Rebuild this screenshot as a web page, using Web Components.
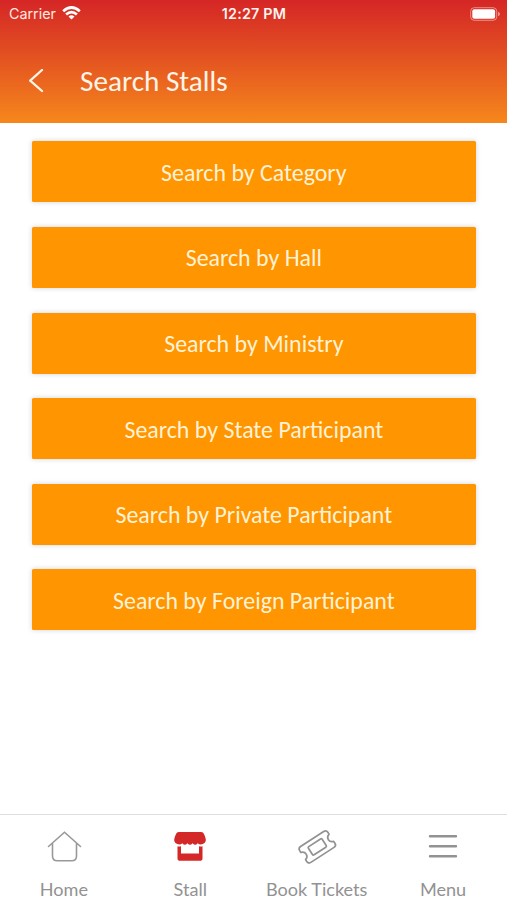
<!DOCTYPE html>
<html lang="en">
<head>
<meta charset="utf-8">
<title>Search Stalls</title>
<style>
html,body{margin:0;height:100%;background:#fff}
body{font-family:Carlito,Lato,sans-serif;overflow:hidden}
</style>
</head>
<body>
<stall-app></stall-app>
<script>
const define = (name, html, setup) => customElements.define(name, class extends HTMLElement {
  constructor() {
    super();
    this.attachShadow({ mode: 'open' }).innerHTML = html;
  }
  connectedCallback() { if (setup) setup(this); }
});

define('status-bar', `
<style>
:host{display:grid;grid-template-columns:1fr auto 1fr;align-items:center;height:27px;padding:0 7px 0 9px;color:#fff;font:14.3px/27px Inter,sans-serif}
.left{display:flex;align-items:center;gap:6px;color:#ffe9e3}
.time{font-weight:600;font-size:14.3px;letter-spacing:.2px;color:#fff4f0;margin-right:1px}
.battery{justify-self:end}
svg{display:block}
.wifi{margin-top:-2px}
</style>
<div class="left"><span>Carrier</span>
<svg class="wifi" width="19" height="14" viewBox="0 0 19 14" fill="none" stroke="#fff" stroke-width="2.7"><path d="M1.2 5.3Q9.5-2.3 17.8 5.3M4.1 8.4Q9.5 3.7 14.9 8.4"/><path d="M6.5 10.6Q9.5 8.1 12.5 10.6L9.5 13.6Z" fill="#fff" stroke="none"/></svg></div>
<span class="time">12:27 PM</span>
<svg class="battery" width="30" height="14" viewBox="0 0 30 14"><rect x=".7" y=".7" width="26" height="12.6" rx="3.5" fill="none" stroke="#fff" stroke-opacity=".45"/><rect x="2.3" y="2.3" width="22.8" height="9.4" rx="2" fill="#fff"/><path d="M28 4.8Q30 5.5 30 7Q30 8.5 28 9.2Z" fill="#fff" opacity=".5"/></svg>`);

define('title-bar', `
<style>
:host{display:flex;align-items:center;height:96px;box-sizing:border-box;padding:11px 0 0 28px;color:#fff4e8;font-size:29.2px;line-height:34px}
svg{display:block;width:16px;height:24px;margin-right:36px}
</style>
<svg viewBox="0 0 16 24" fill="none" stroke="#fff4e8" stroke-width="2.3" stroke-linecap="round" stroke-linejoin="round"><path d="M14 1 2.2 11.7 14 22"/></svg>
<span><slot></slot></span>`);

define('search-button', `
<style>
:host{display:flex;align-items:center;justify-content:center;height:61px;box-sizing:border-box;padding-top:2px;border-radius:1.5px;background:#ff9500;box-shadow:0 0 5px rgba(50,50,80,.22);color:#fff2d6;font-size:23.9px;line-height:28px;white-space:nowrap}
</style><span><slot></slot></span>`);

const icons = {
  home: '<path d="M4.5 17.5 20.5 3.2 36.5 17.5M8.5 14.5V27Q8.5 31.8 13.3 31.8H27.7Q32.5 31.8 32.5 27V14.5" stroke="#999" stroke-width="1.6" stroke-linecap="round"/>',
  stall: '<path d="M8.8 3H31.2Q33.2 3 34 5L35.3 8.2Q37 13.3 32.8 15.1Q29.5 16.2 27.7 14.2Q25.2 17.5 22.6 14.2Q20 17.5 17.4 14.2Q14.8 17.5 12.3 14.2Q10.5 16.2 7.2 15.1Q3 13.3 4.7 8.2L6 5Q6.8 3 8.8 3Z" fill="#d42727"/><path d="M7.5 17.2Q9.2 17.8 11 17.2V24.5H29V17.2Q30.8 17.8 32.5 17.2V29.2Q32.5 31.8 29.8 31.8H10.2Q7.5 31.8 7.5 29.2Z" fill="#d42727"/>',
  ticket: '<g transform="translate(.3 .4) rotate(-33 20 17.5)" stroke="#929292" stroke-width="1.7" stroke-linejoin="round"><path d="M6.2 8H33.8Q36.8 8 36.8 11V13.2Q33.2 14.2 33.2 17.5Q33.2 20.8 36.8 21.8V24Q36.8 27 33.8 27H6.2Q3.2 27 3.2 24V21.8Q6.8 20.8 6.8 17.5Q6.8 14.2 3.2 13.2V11Q3.2 8 6.2 8Z"/><rect x="11.8" y="12.6" width="16.4" height="9.8" rx="1.2"/></g>',
  menu: '<path d="M7 7.2H33M7 17.2H33M7 27.2H33" stroke="#929292" stroke-width="2.4" stroke-linecap="round"/>'
};

define('tab-item', `
<style>
:host{display:flex;flex-direction:column;align-items:center;padding-top:14px;color:#929292;font-family:Lato,sans-serif;font-size:18.1px;line-height:24px;white-space:nowrap}
svg{display:block;width:40px;height:36px;overflow:visible;margin-bottom:12px}
</style><svg viewBox="0 0 40 36" fill="none"></svg><span><slot></slot></span>`,
el => { el.shadowRoot.querySelector('svg').innerHTML = icons[el.getAttribute('icon')]; });

define('tab-bar', `
<style>
:host{display:grid;grid-template-columns:repeat(4,126.4px);justify-content:center;height:86px;box-sizing:border-box;border-top:1px solid #dedede;background:#fff}
</style><slot></slot>`);

define('stall-app', `
<style>
:host{display:flex;flex-direction:column;height:900px;width:507px}
header{height:123px;background:linear-gradient(#d52626,#e04a22 38%,#f6871c)}
main{flex:1;display:flex;flex-direction:column;gap:24.6px;padding:18.4px 31px 0 31.7px}
</style>
<header><status-bar></status-bar><title-bar>Search Stalls</title-bar></header>
<main>
<search-button>Search by Category</search-button>
<search-button>Search by Hall</search-button>
<search-button>Search by Ministry</search-button>
<search-button>Search by State Participant</search-button>
<search-button>Search by Private Participant</search-button>
<search-button>Search by Foreign Participant</search-button>
</main>
<tab-bar>
<tab-item icon="home">Home</tab-item>
<tab-item icon="stall">Stall</tab-item>
<tab-item icon="ticket">Book Tickets</tab-item>
<tab-item icon="menu">Menu</tab-item>
</tab-bar>`);
</script>
</body>
</html>
